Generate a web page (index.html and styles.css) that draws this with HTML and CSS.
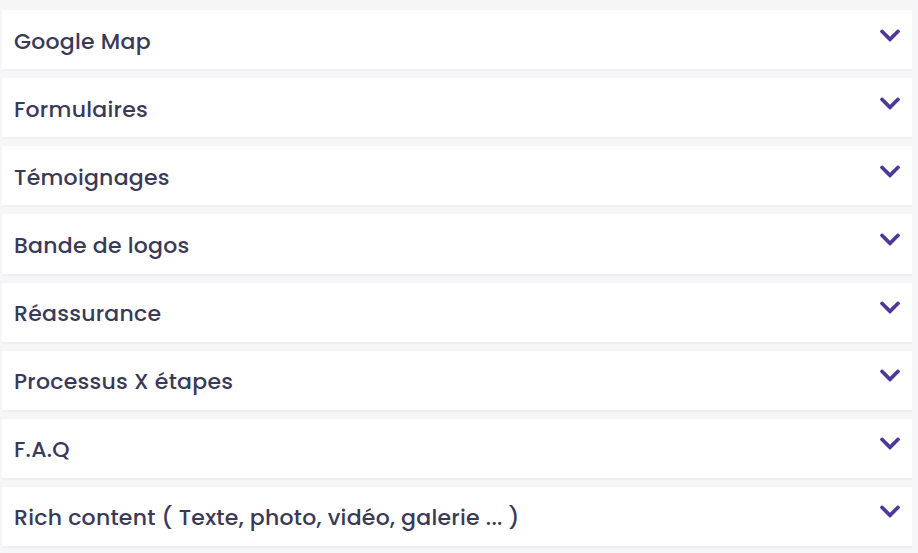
FILE: index.html
```html
<!DOCTYPE html>
<html lang="fr">
<head>
<meta charset="utf-8">
<title>Accordéon</title>
<link rel="stylesheet" href="styles.css">
</head>
<body>
<div class="accordion">
  <div class="item"><span class="label">Google Map</span><svg class="chev" viewBox="5 123 438 266"><path d="M207.029 381.476L12.686 187.132c-9.373-9.373-9.373-24.569 0-33.941l22.667-22.667c9.357-9.357 24.522-9.375 33.901-.04L224 284.505l154.745-154.021c9.379-9.335 24.544-9.317 33.901.04l22.667 22.667c9.373 9.373 9.373 24.569 0 33.941L240.971 381.476c-9.373 9.372-24.569 9.372-33.942 0z"/></svg></div>
  <div class="item"><span class="label">Formulaires</span><svg class="chev" viewBox="5 123 438 266"><path d="M207.029 381.476L12.686 187.132c-9.373-9.373-9.373-24.569 0-33.941l22.667-22.667c9.357-9.357 24.522-9.375 33.901-.04L224 284.505l154.745-154.021c9.379-9.335 24.544-9.317 33.901.04l22.667 22.667c9.373 9.373 9.373 24.569 0 33.941L240.971 381.476c-9.373 9.372-24.569 9.372-33.942 0z"/></svg></div>
  <div class="item"><span class="label">Témoignages</span><svg class="chev" viewBox="5 123 438 266"><path d="M207.029 381.476L12.686 187.132c-9.373-9.373-9.373-24.569 0-33.941l22.667-22.667c9.357-9.357 24.522-9.375 33.901-.04L224 284.505l154.745-154.021c9.379-9.335 24.544-9.317 33.901.04l22.667 22.667c9.373 9.373 9.373 24.569 0 33.941L240.971 381.476c-9.373 9.372-24.569 9.372-33.942 0z"/></svg></div>
  <div class="item"><span class="label">Bande de logos</span><svg class="chev" viewBox="5 123 438 266"><path d="M207.029 381.476L12.686 187.132c-9.373-9.373-9.373-24.569 0-33.941l22.667-22.667c9.357-9.357 24.522-9.375 33.901-.04L224 284.505l154.745-154.021c9.379-9.335 24.544-9.317 33.901.04l22.667 22.667c9.373 9.373 9.373 24.569 0 33.941L240.971 381.476c-9.373 9.372-24.569 9.372-33.942 0z"/></svg></div>
  <div class="item"><span class="label">Réassurance</span><svg class="chev" viewBox="5 123 438 266"><path d="M207.029 381.476L12.686 187.132c-9.373-9.373-9.373-24.569 0-33.941l22.667-22.667c9.357-9.357 24.522-9.375 33.901-.04L224 284.505l154.745-154.021c9.379-9.335 24.544-9.317 33.901.04l22.667 22.667c9.373 9.373 9.373 24.569 0 33.941L240.971 381.476c-9.373 9.372-24.569 9.372-33.942 0z"/></svg></div>
  <div class="item"><span class="label">Processus X étapes</span><svg class="chev" viewBox="5 123 438 266"><path d="M207.029 381.476L12.686 187.132c-9.373-9.373-9.373-24.569 0-33.941l22.667-22.667c9.357-9.357 24.522-9.375 33.901-.04L224 284.505l154.745-154.021c9.379-9.335 24.544-9.317 33.901.04l22.667 22.667c9.373 9.373 9.373 24.569 0 33.941L240.971 381.476c-9.373 9.372-24.569 9.372-33.942 0z"/></svg></div>
  <div class="item"><span class="label">F.A.Q</span><svg class="chev" viewBox="5 123 438 266"><path d="M207.029 381.476L12.686 187.132c-9.373-9.373-9.373-24.569 0-33.941l22.667-22.667c9.357-9.357 24.522-9.375 33.901-.04L224 284.505l154.745-154.021c9.379-9.335 24.544-9.317 33.901.04l22.667 22.667c9.373 9.373 9.373 24.569 0 33.941L240.971 381.476c-9.373 9.372-24.569 9.372-33.942 0z"/></svg></div>
  <div class="item"><span class="label">Rich content ( Texte, photo, vidéo, galerie ... )</span><svg class="chev" viewBox="5 123 438 266"><path d="M207.029 381.476L12.686 187.132c-9.373-9.373-9.373-24.569 0-33.941l22.667-22.667c9.357-9.357 24.522-9.375 33.901-.04L224 284.505l154.745-154.021c9.379-9.335 24.544-9.317 33.901.04l22.667 22.667c9.373 9.373 9.373 24.569 0 33.941L240.971 381.476c-9.373 9.372-24.569 9.372-33.942 0z"/></svg></div>
</div>
</body>
</html>
```
FILE: styles.css
```css
html, body {
  margin: 0;
  padding: 0;
  background: #f6f6f8;
}
body {
  padding: 10px 6px 0 2px;
  font-family: "Poppins", "Inter", "Noto Sans", sans-serif;
}
.accordion {
  display: flex;
  flex-direction: column;
  gap: 7px;
}
.item {
  height: 61.14px;
  box-sizing: border-box;
  background: #ffffff;
  border-bottom: 2px solid #f0f0f3;
  display: flex;
  align-items: center;
  justify-content: space-between;
  padding: 0 12px 0 12px;
}
.label {
  font-size: 22px;
  font-weight: 500;
  color: #3a3958;
  letter-spacing: 0.25px;
  padding-top: 3px;
}
.chev {
  width: 20px;
  height: 13px;
  fill: #4e3799;
  align-self: flex-start;
  margin-top: 18.5px;
}
```
